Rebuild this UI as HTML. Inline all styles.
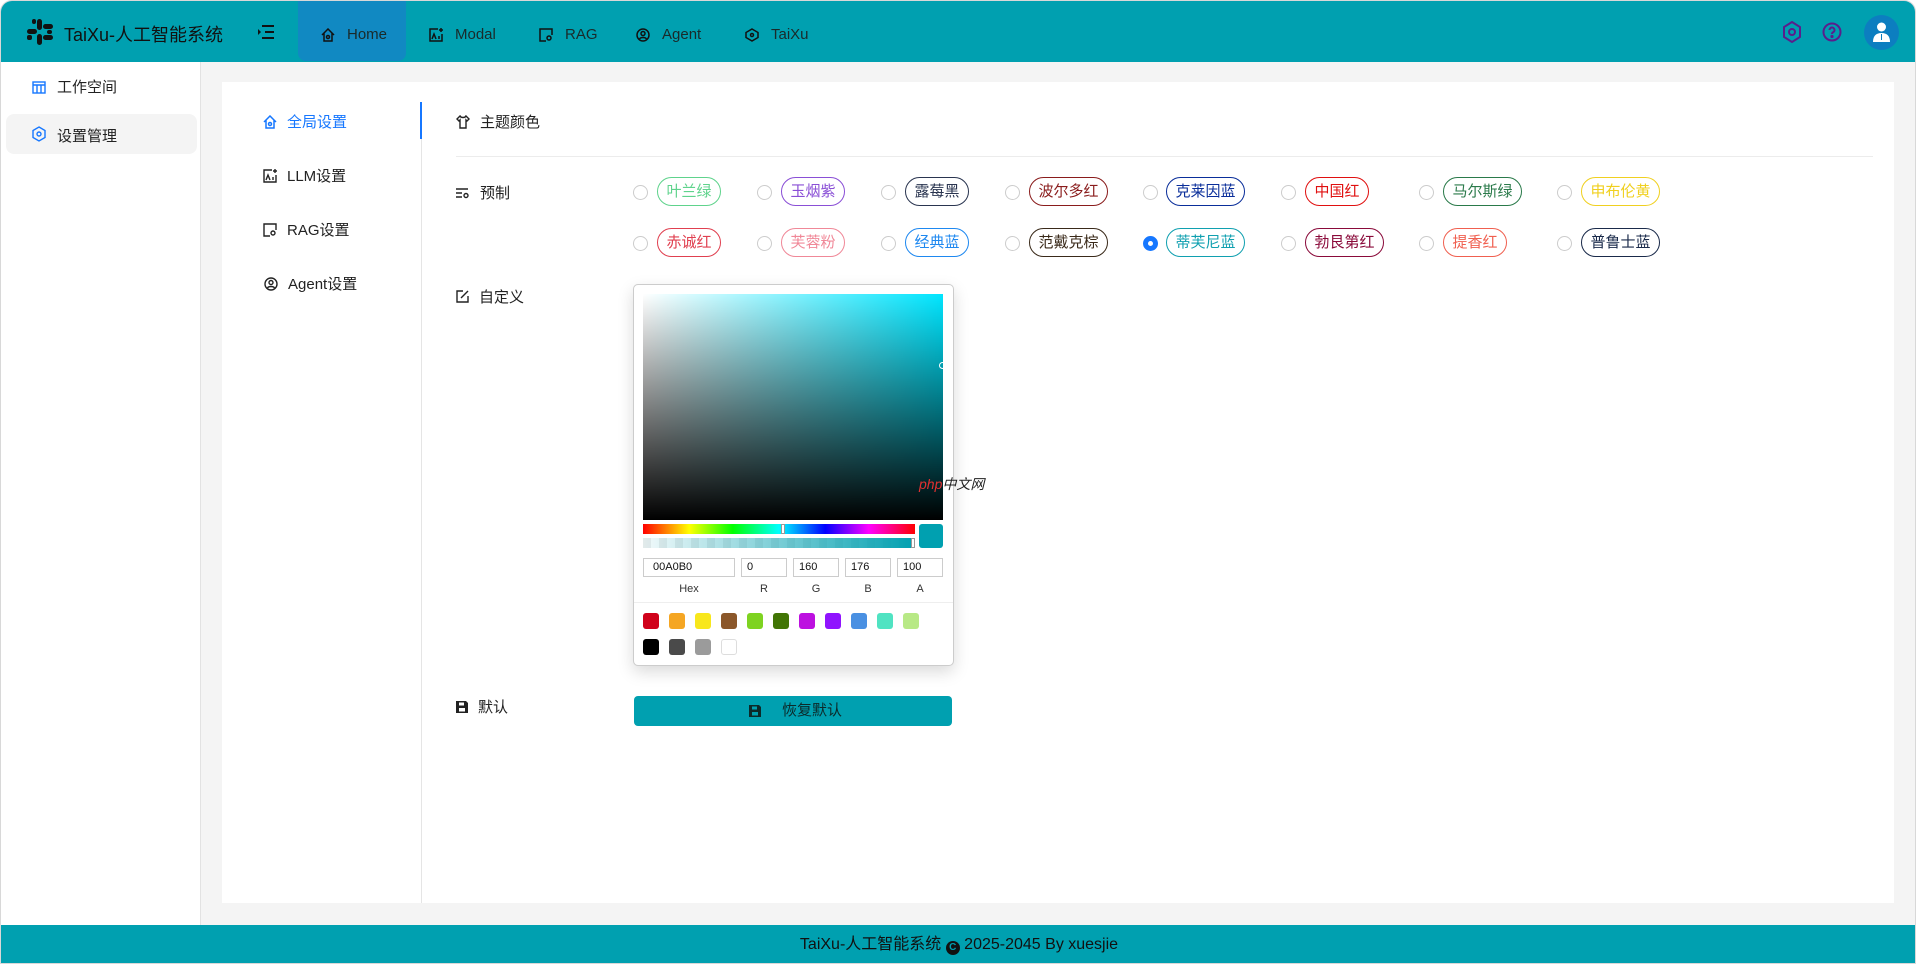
<!DOCTYPE html>
<html><head><meta charset="utf-8"><style>
*{box-sizing:border-box;margin:0;padding:0}
body{width:1916px;height:967px;background:#fff;font-family:"Liberation Sans","Noto Sans CJK SC",sans-serif;color:#222;position:relative;overflow:hidden}
.abs{position:absolute}
.frame{left:0;top:0;width:1916px;height:964px;border:1px solid #d8d8d8;border-radius:12px 12px 0 0;overflow:hidden;background:#f4f4f4}
.hdr{left:0;top:0;width:1916px;height:61px;background:#00A0B0}
.nav{top:3px;height:61px;display:flex;align-items:center;font-size:15px;color:#1a2a2a}
.nav svg{margin-right:12px}
.side{left:0;top:61px;width:200px;height:863px;background:#fff;border-right:1px solid #e2e2e2}
.card{left:221px;top:81px;width:1672px;height:821px;background:#fff}
.foot{left:0;top:924px;width:1916px;height:40px;background:#00A0B0;color:#111;font-size:16px;text-align:center;line-height:40px}
.lbl{font-size:15px;display:flex;align-items:center}
.lbl svg{margin-right:10px}
.radio{width:15px;height:15px;border:1px solid #ccc;border-radius:50%;background:#fff}
.tag{height:29px;border:1px solid;border-radius:15px;font-size:15px;line-height:27px;text-align:center}
.inp{height:19px;border:1px solid #ccc;font-size:11px;line-height:17px;padding-left:9px;color:#111}
.cl{font-size:11px;color:#333;text-align:center}
.sw{width:16px;height:16px;border-radius:3px}
</style></head><body>
<div class="abs frame">
<div class="abs hdr"></div>
<svg class="abs" style="left:25px;top:17px" width="28" height="28" viewBox="0 0 28 28" fill="#111"><rect x="11" y="1" width="5" height="11" rx="2.5"/><rect x="17" y="6" width="10" height="5" rx="2.5"/><rect x="1" y="11" width="10" height="5" rx="2.5"/><rect x="6" y="1" width="4" height="5" rx="2"/><rect x="17" y="17" width="10" height="5" rx="2.5"/><rect x="11" y="16" width="5" height="11" rx="2.5"/><rect x="1" y="17" width="5" height="5" rx="2"/><rect x="21" y="12" width="5" height="4" rx="2"/></svg>
<div class="abs" style="left:63px;top:20px;font-size:18px;color:#111">TaiXu-人工智能系统</div>
<svg class="abs" style="left:257px;top:24px" width="16" height="14" viewBox="0 0 16 14" stroke="#111" stroke-width="2" fill="none"><path d="M4 1h12M7 7h9M4 13h12"/><path d="M0 4l3 3-3 3" fill="#111" stroke="none"/></svg>
<div class="abs" style="left:297px;top:0;width:108px;height:60px;background:#1189C2;border-radius:0 0 8px 8px"></div>
<div class="abs nav" style="left:320px"><svg width="14" height="14" viewBox="0 0 14 14" fill="none" stroke="#111" stroke-width="1.5"><path d="M1 7L7 1l6 6M3 5v8h8V5"/><circle cx="7" cy="9" r="1.5"/></svg>Home</div>
<div class="abs nav" style="left:428px"><svg width="14" height="14" viewBox="0 0 14 14" fill="none" stroke="#111" stroke-width="1.5"><path d="M9 1H1v12h12V6"/><path d="M3 11l2-5 2 5M10 8v3"/><path d="M12 0v4M10 2h4"/></svg>Modal</div>
<div class="abs nav" style="left:538px"><svg width="14" height="14" viewBox="0 0 14 14" fill="none" stroke="#111" stroke-width="1.5"><path d="M7 13H1V1h12v6"/><circle cx="10" cy="10" r="2"/></svg>RAG</div>
<div class="abs nav" style="left:635px"><svg width="14" height="14" viewBox="0 0 14 14" fill="none" stroke="#111" stroke-width="1.5"><circle cx="7" cy="7" r="6"/><circle cx="7" cy="5.5" r="2"/><path d="M3.5 11c1-2 6-2 7 0"/></svg>Agent</div>
<div class="abs nav" style="left:744px"><svg width="14" height="14" viewBox="0 0 14 14" fill="none" stroke="#111" stroke-width="1.5"><path d="M7 1l6 3.5v5L7 13l-6-3.5v-5z"/><circle cx="7" cy="7" r="1.5"/></svg>TaiXu</div>
<svg class="abs" style="left:1781px;top:20px" width="20" height="22" viewBox="0 0 20 22" fill="none" stroke="#5a1e8c" stroke-width="2"><path d="M10 1l8 5v10l-8 5-8-5V6z"/><circle cx="10" cy="11" r="3"/></svg>
<svg class="abs" style="left:1821px;top:21px" width="20" height="20" viewBox="0 0 20 20" fill="none" stroke="#5a1e8c" stroke-width="2"><circle cx="10" cy="10" r="8.5"/><path d="M7.5 8a2.5 2.5 0 1 1 3.5 2.3c-.7.4-1 1-1 1.7"/><circle cx="10" cy="14.5" r=".6" fill="#5a1e8c"/></svg>
<div class="abs" style="left:1863px;top:14px;width:35px;height:35px;border-radius:50%;background:#0C7EC0"></div>
<svg class="abs" style="left:1872px;top:21px" width="17" height="20" viewBox="0 0 17 20" fill="#fff"><circle cx="8.5" cy="5" r="4.5"/><path d="M0 20c0-6 3-9 8.5-9s8.5 3 8.5 9z"/><path d="M8 12h1v6H8z" fill="#0C7EC0"/></svg>

<div class="abs side"></div>
<svg class="abs" style="left:31px;top:80px" width="14" height="13" viewBox="0 0 14 13" fill="none" stroke="#1677ff" stroke-width="1.4"><rect x="1" y="1" width="12" height="11"/><path d="M1 4h12M5 4v8M9 4v8"/></svg>
<div class="abs" style="left:56px;top:75px;font-size:15px">工作空间</div>
<div class="abs" style="left:5px;top:113px;width:191px;height:40px;background:#f4f4f4;border-radius:8px"></div>
<svg class="abs" style="left:31px;top:125px" width="14" height="16" viewBox="0 0 14 16" fill="none" stroke="#1677ff" stroke-width="1.4"><path d="M7 1l6 3.5v7L7 15l-6-3.5v-7z"/><circle cx="7" cy="8" r="2"/></svg>
<div class="abs" style="left:56px;top:124px;font-size:15px">设置管理</div>

<div class="abs card"></div>
<div class="abs" style="left:420px;top:101px;width:1px;height:801px;background:#e5e5e5"></div>
<div class="abs" style="left:419px;top:101px;width:2px;height:37px;background:#1677ff"></div>
<div class="abs lbl" style="left:262px;top:110px;color:#1677ff"><svg width="14" height="14" viewBox="0 0 14 14" fill="none" stroke="#1677ff" stroke-width="1.5"><path d="M1 7L7 1l6 6M3 5v8h8V5"/><circle cx="7" cy="9" r="1.5"/></svg>全局设置</div>
<div class="abs lbl" style="left:262px;top:164px"><svg width="14" height="14" viewBox="0 0 14 14" fill="none" stroke="#222" stroke-width="1.4"><path d="M9 1H1v12h12V6"/><path d="M3 11l2-5 2 5M10 8v3"/><path d="M12 0v4M10 2h4"/></svg>LLM设置</div>
<div class="abs lbl" style="left:262px;top:218px"><svg width="14" height="14" viewBox="0 0 14 14" fill="none" stroke="#222" stroke-width="1.4"><path d="M7 13H1V1h12v6"/><circle cx="10" cy="10" r="2"/></svg>RAG设置</div>
<div class="abs lbl" style="left:263px;top:272px"><svg width="14" height="14" viewBox="0 0 14 14" fill="none" stroke="#222" stroke-width="1.4"><circle cx="7" cy="7" r="6"/><circle cx="7" cy="5.5" r="2"/><path d="M3.5 11c1-2 6-2 7 0"/></svg>Agent设置</div>

<div class="abs lbl" style="left:455px;top:110px"><svg width="14" height="14" viewBox="0 0 14 14" fill="none" stroke="#222" stroke-width="1.4"><path d="M4 1L1 4l2 2 1-1v8h6V5l1 1 2-2-3-3c-1 2-5 2-6 0z"/></svg>主题颜色</div>
<div class="abs" style="left:455px;top:155px;width:1417px;height:1px;background:#ececec"></div>
<div class="abs lbl" style="left:455px;top:181px"><svg width="14" height="12" viewBox="0 0 14 12" fill="none" stroke="#222" stroke-width="1.4"><path d="M0 2h12M0 6h6M0 10h6"/><circle cx="10" cy="8.5" r="2"/></svg>预制</div>
<div class="abs lbl" style="left:455px;top:285px"><svg width="13" height="13" viewBox="0 0 13 13" fill="none" stroke="#222" stroke-width="1.4"><path d="M7 1H1v11h11V6"/><path d="M5 8l7-7"/></svg>自定义</div>
<div class="abs lbl" style="left:455px;top:695px"><svg width="12" height="12" viewBox="0 0 12 12" fill="#222"><path d="M0 0h10l2 2v10H0z"/><rect x="3" y="1.5" width="5" height="3" fill="#fff"/><rect x="3" y="7" width="6" height="3.5" fill="#fff"/></svg>默认</div>

<div class="abs radio" style="left:632px;top:184px"></div><div class="abs tag" style="left:656px;top:176px;width:64px;color:#5fd38c;border-color:#5fd38c">叶兰绿</div>
<div class="abs radio" style="left:756px;top:184px"></div><div class="abs tag" style="left:780px;top:176px;width:64px;color:#8a4fd6;border-color:#8a4fd6">玉烟紫</div>
<div class="abs radio" style="left:880px;top:184px"></div><div class="abs tag" style="left:904px;top:176px;width:64px;color:#2a3550;border-color:#2a3550">露莓黑</div>
<div class="abs radio" style="left:1004px;top:184px"></div><div class="abs tag" style="left:1028px;top:176px;width:79px;color:#8a1c1c;border-color:#8a1c1c">波尔多红</div>
<div class="abs radio" style="left:1142px;top:184px"></div><div class="abs tag" style="left:1165px;top:176px;width:79px;color:#0a2e9a;border-color:#0a2e9a">克莱因蓝</div>
<div class="abs radio" style="left:1280px;top:184px"></div><div class="abs tag" style="left:1304px;top:176px;width:64px;color:#e01010;border-color:#e01010">中国红</div>
<div class="abs radio" style="left:1418px;top:184px"></div><div class="abs tag" style="left:1442px;top:176px;width:79px;color:#2a7a4a;border-color:#2a7a4a">马尔斯绿</div>
<div class="abs radio" style="left:1556px;top:184px"></div><div class="abs tag" style="left:1580px;top:176px;width:79px;color:#f0d020;border-color:#f0d020">申布伦黄</div>
<div class="abs radio" style="left:632px;top:235px"></div><div class="abs tag" style="left:656px;top:227px;width:64px;color:#e04050;border-color:#e04050">赤诚红</div>
<div class="abs radio" style="left:756px;top:235px"></div><div class="abs tag" style="left:780px;top:227px;width:64px;color:#f08898;border-color:#f08898">芙蓉粉</div>
<div class="abs radio" style="left:880px;top:235px"></div><div class="abs tag" style="left:904px;top:227px;width:64px;color:#1e88f0;border-color:#1e88f0">经典蓝</div>
<div class="abs radio" style="left:1004px;top:235px"></div><div class="abs tag" style="left:1028px;top:227px;width:79px;color:#3a2a1a;border-color:#3a2a1a">范戴克棕</div>
<div class="abs radio" style="left:1142px;top:235px;border:5px solid #1677ff"></div><div class="abs tag" style="left:1165px;top:227px;width:79px;color:#10a0b0;border-color:#10a0b0">蒂芙尼蓝</div>
<div class="abs radio" style="left:1280px;top:235px"></div><div class="abs tag" style="left:1304px;top:227px;width:79px;color:#8a0a3a;border-color:#8a0a3a">勃艮第红</div>
<div class="abs radio" style="left:1418px;top:235px"></div><div class="abs tag" style="left:1442px;top:227px;width:64px;color:#f06050;border-color:#f06050">提香红</div>
<div class="abs radio" style="left:1556px;top:235px"></div><div class="abs tag" style="left:1580px;top:227px;width:79px;color:#1a2a4a;border-color:#1a2a4a">普鲁士蓝</div>

<div class="abs" style="left:632px;top:283px;width:321px;height:382px;background:#fff;border:1px solid #ccc;border-radius:5px;box-shadow:0 6px 16px rgba(0,0,0,.15)"></div>
<div class="abs" style="left:642px;top:293px;width:300px;height:226px;background:linear-gradient(to top,#000,rgba(0,0,0,0)),linear-gradient(to right,#fff,hsl(186,100%,50%))"></div>
<div class="abs" style="left:938px;top:361px;width:7px;height:7px;border:1.5px solid #fff;border-radius:50%"></div>
<div class="abs" style="left:642px;top:523px;width:272px;height:10px;background:linear-gradient(to right,#f00,#ff0 17%,#0f0 33%,#0ff 50%,#00f 67%,#f0f 83%,#f00)"></div>
<div class="abs" style="left:780px;top:523px;width:4px;height:10px;background:#fff;border:1px solid #999"></div>
<div class="abs" style="left:642px;top:537px;width:272px;height:10px;background:linear-gradient(to right,rgba(0,160,176,.05),#00A0B0),repeating-linear-gradient(90deg,#eee 0 8px,#fff 8px 16px)"></div>
<div class="abs" style="left:910px;top:537px;width:4px;height:10px;background:#fff;border:1px solid #999"></div>
<div class="abs" style="left:918px;top:523px;width:24px;height:24px;background:#00A0B0;border-radius:3px"></div>
<div class="abs inp" style="left:642px;top:557px;width:92px">00A0B0</div>
<div class="abs inp" style="left:740px;top:557px;width:46px;padding-left:5px">0</div>
<div class="abs inp" style="left:792px;top:557px;width:46px;padding-left:5px">160</div>
<div class="abs inp" style="left:844px;top:557px;width:46px;padding-left:5px">176</div>
<div class="abs inp" style="left:896px;top:557px;width:46px;padding-left:5px">100</div>
<div class="abs cl" style="left:642px;top:582px;width:92px">Hex</div>
<div class="abs cl" style="left:740px;top:582px;width:46px">R</div>
<div class="abs cl" style="left:792px;top:582px;width:46px">G</div>
<div class="abs cl" style="left:844px;top:582px;width:46px">B</div>
<div class="abs cl" style="left:896px;top:582px;width:46px">A</div>
<div class="abs" style="left:633px;top:601px;width:319px;height:1px;background:#eee"></div>
<div class="abs sw" style="left:642px;top:612px;background:#d0021b"></div>
<div class="abs sw" style="left:668px;top:612px;background:#f5a623"></div>
<div class="abs sw" style="left:694px;top:612px;background:#f8e71c"></div>
<div class="abs sw" style="left:720px;top:612px;background:#8b572a"></div>
<div class="abs sw" style="left:746px;top:612px;background:#7ed321"></div>
<div class="abs sw" style="left:772px;top:612px;background:#417505"></div>
<div class="abs sw" style="left:798px;top:612px;background:#bd10e0"></div>
<div class="abs sw" style="left:824px;top:612px;background:#9013fe"></div>
<div class="abs sw" style="left:850px;top:612px;background:#4a90e2"></div>
<div class="abs sw" style="left:876px;top:612px;background:#50e3c2"></div>
<div class="abs sw" style="left:902px;top:612px;background:#b8e986"></div>
<div class="abs sw" style="left:642px;top:638px;background:#000"></div>
<div class="abs sw" style="left:668px;top:638px;background:#4a4a4a"></div>
<div class="abs sw" style="left:694px;top:638px;background:#9b9b9b"></div>
<div class="abs sw" style="left:720px;top:638px;background:#fff;border:1px solid #ddd"></div>
<div class="abs" style="left:918px;top:473px;font-size:14px;color:#222;font-style:italic"><span style="color:#e03030">php</span>中文网</div>

<div class="abs" style="left:633px;top:695px;width:318px;height:30px;background:#00A0B0;border-radius:4px;font-size:15px;line-height:30px;color:#0c2a2a"><svg style="position:absolute;left:115px;top:9px" width="12" height="12" viewBox="0 0 12 12" fill="#0c2a2a"><path d="M0 0h10l2 2v10H0z"/><rect x="3" y="1.5" width="5" height="3" fill="#00A0B0"/><rect x="3" y="7" width="6" height="3.5" fill="#00A0B0"/></svg><span style="position:absolute;left:148px">恢复默认</span></div>

<div class="abs foot">TaiXu-人工智能系统 <span style="display:inline-block;width:14px;height:14px;border-radius:50%;background:#111;color:#00A0B0;font-size:10px;line-height:14px;vertical-align:-1px;font-weight:bold">C</span> 2025-2045 By xuesjie</div>
</div>
</body></html>
